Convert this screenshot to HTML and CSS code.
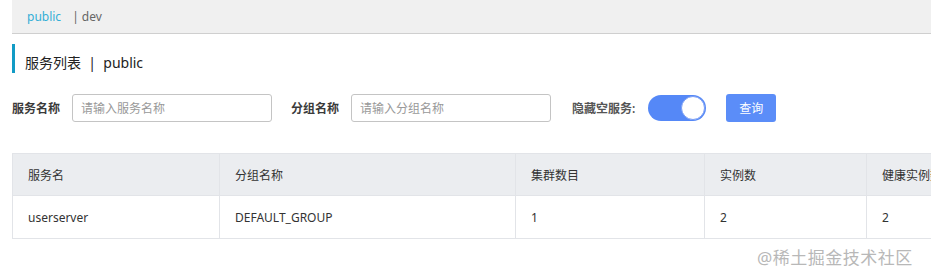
FILE: index.html
```html
<!DOCTYPE html>
<html lang="zh-CN">
<head>
    <meta charset="UTF-8">
    <meta name="viewport" content="width=device-width, initial-scale=1.0">
    <title>服务列表</title>
    <link rel="stylesheet" href="styles.css">
</head>
<body>
    <div class="page">
        <nav class="ns-bar">
            <span class="ns active">public</span>
            <span class="ns">| dev</span>
        </nav>
        <h2 class="title">服务列表 &nbsp;|&nbsp; public</h2>
        <form class="search">
            <label class="field-label">服务名称</label>
            <input class="field" type="text" placeholder="请输入服务名称">
            <label class="field-label">分组名称</label>
            <input class="field last" type="text" placeholder="请输入分组名称">
            <label class="field-label light">隐藏空服务:</label>
            <span class="switch"><span class="knob"></span></span>
            <button type="button" class="btn">查询</button>
        </form>
        <table class="list">
            <thead>
                <tr>
                    <th class="c1">服务名</th>
                    <th class="c2">分组名称</th>
                    <th class="c3">集群数目</th>
                    <th class="c4">实例数</th>
                    <th class="c5">健康实例数</th>
                </tr>
            </thead>
            <tbody>
                <tr>
                    <td>userserver</td>
                    <td>DEFAULT_GROUP</td>
                    <td>1</td>
                    <td>2</td>
                    <td>2</td>
                </tr>
            </tbody>
        </table>
    </div>
    <div class="watermark">@稀土掘金技术社区</div>
</body>
</html>
```

FILE: styles.css
```css
html, body {
    margin: 0;
    height: 100%;
    overflow: hidden;
}
body {
    font-family: "Noto Sans", "Noto Sans CJK SC", sans-serif;
    font-size: 12px;
    color: #333;
    background: #fff;
    position: relative;
}
.page {
    padding-left: 12px;
    border-left: 3px solid #f6f6f6;
    margin-left: -3px;
    width: 1100px;
}
.ns-bar {
    background: #f0f0f0;
    border-bottom: 1px solid #cfcfcf;
    display: flex;
    align-items: center;
    padding-left: 15px;
    gap: 11px;
    box-sizing: border-box;
    height: 34px;
}
.ns {
    color: #666;
    font-size: 12px;
}
.ns.active {
    color: #33aed6;
}
.title {
    margin: 10px 0 0;
    height: 29px;
    line-height: 38px;
    border-left: 3px solid #129bc5;
    padding-left: 10px;
    font-size: 14px;
    font-weight: normal;
    color: #222;
}
.search {
    display: flex;
    align-items: center;
    margin-top: 21px;
    height: 28px;
}
.field-label {
    font-weight: bold;
    color: #3a3a3a;
    margin-right: 12px;
}
.field-label.light {
    font-weight: 600;
    color: #555;
    margin-right: 13px;
}
.field {
    width: 200px;
    height: 28px;
    box-sizing: border-box;
    border: 1px solid #c4c4c4;
    border-radius: 3px;
    padding: 0 8px;
    font-family: inherit;
    font-size: 12px;
    margin-right: 19px;
}
.field.last {
    margin-right: 21px;
}
.field::placeholder {
    color: #999;
}
.switch {
    width: 58px;
    height: 26px;
    border-radius: 13px;
    background: #5588f7;
    display: flex;
    justify-content: flex-end;
    align-items: center;
    box-sizing: border-box;
    padding-right: 1px;
    margin-right: 20px;
}
.knob {
    width: 24px;
    height: 24px;
    border-radius: 50%;
    background: #fff;
    box-sizing: border-box;
    border: 1px solid #7a9ef5;
}
.btn {
    width: 50px;
    height: 28px;
    border: none;
    border-radius: 3px;
    background: #5b8df8;
    color: #fff;
    font-family: inherit;
    font-size: 12px;
    padding: 0;
}
.list {
    margin-top: 31px;
    border-collapse: collapse;
    table-layout: fixed;
    width: 1080px;
}
.list th, .list td {
    border: 1px solid #e2e4e8;
    text-align: left;
    padding: 0 15px;
    font-weight: normal;
    color: #333;
}
.list th {
    background: #ebedf0;
    height: 41px;
}
.list td {
    height: 42px;
}
.c1 { width: 176px; }
.c2 { width: 265px; }
.c3 { width: 158px; }
.c4 { width: 131px; }
.watermark {
    position: absolute;
    left: 757px;
    top: 244px;
    font-size: 17px;
    color: #b8b8b8;
    letter-spacing: 0.5px;
}
```
